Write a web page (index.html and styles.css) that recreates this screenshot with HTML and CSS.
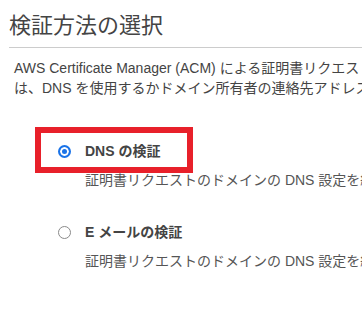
FILE: index.html
```html
<!DOCTYPE html>
<html lang="ja">
<head>
    <meta charset="UTF-8">
    <title>検証方法の選択</title>
    <link rel="stylesheet" href="styles.css">
</head>
<body>
    <div class="section">
        <h2 class="title">検証方法の選択</h2>
        <p class="intro">AWS Certificate Manager (ACM) による証明書リクエストの発行前に、ドメインの所有者であることを確認する必要があります。検証に<br>は、DNS を使用するかドメイン所有者の連絡先アドレスに E メールを送信する方法があります。</p>

        <div class="options">
            <div class="option">
                <span class="radio checked"></span>
                <div class="text">
                    <div class="label">DNS の検証</div>
                    <div class="desc">証明書リクエストのドメインの DNS 設定を編集する権限がある場合は、このオプションを選択します。</div>
                </div>
                <!-- 注釈の赤枠 -->
                <div class="highlight"></div>
            </div>
            <div class="option">
                <span class="radio"></span>
                <div class="text">
                    <div class="label">E メールの検証</div>
                    <div class="desc">証明書リクエストのドメインの DNS 設定を編集する権限がない場合は、このオプションを選択します。</div>
                </div>
            </div>
        </div>
    </div>
</body>
</html>
```

FILE: styles.css
```css
* {
    margin: 0;
    padding: 0;
    box-sizing: border-box;
}
html, body {
    background: #fff;
    overflow: hidden;
}
body {
    font-family: "Liberation Sans", Arial, "Noto Sans CJK JP", sans-serif;
    color: #444;
}
.section {
    padding: 12px 0 0 9px;
}
.title {
    font-size: 22px;
    font-weight: normal;
    line-height: 28px;
    padding-bottom: 7px;
    border-bottom: 1px solid #ccc;
    white-space: nowrap;
}
.intro {
    margin-top: 10px;
    padding-left: 5px;
    font-size: 14px;
    line-height: 20px;
    white-space: nowrap;
}
.options {
    margin-top: 43px;
    padding-left: 49px;
}
.option {
    display: flex;
    align-items: flex-start;
    position: relative;
}
.option + .option {
    margin-top: 32px;
}
.radio {
    flex: none;
    width: 13px;
    height: 13px;
    margin: 4px 14px 0 0;
    border-radius: 50%;
    border: 1px solid #8a8a8a;
    background: #fff;
}
.radio.checked {
    border: 2px solid #1a73e8;
    background: #1a73e8;
    box-shadow: inset 0 0 0 2px #fff;
}
.text {
    font-size: 14px;
    line-height: 20px;
    white-space: nowrap;
}
.label {
    font-weight: bold;
    color: #444;
}
.desc {
    margin-top: 9px;
    color: #555;
}
.highlight {
    position: absolute;
    left: -23px;
    top: -14px;
    width: 158px;
    height: 46px;
    border: 6px solid #e8202a;
}
```
